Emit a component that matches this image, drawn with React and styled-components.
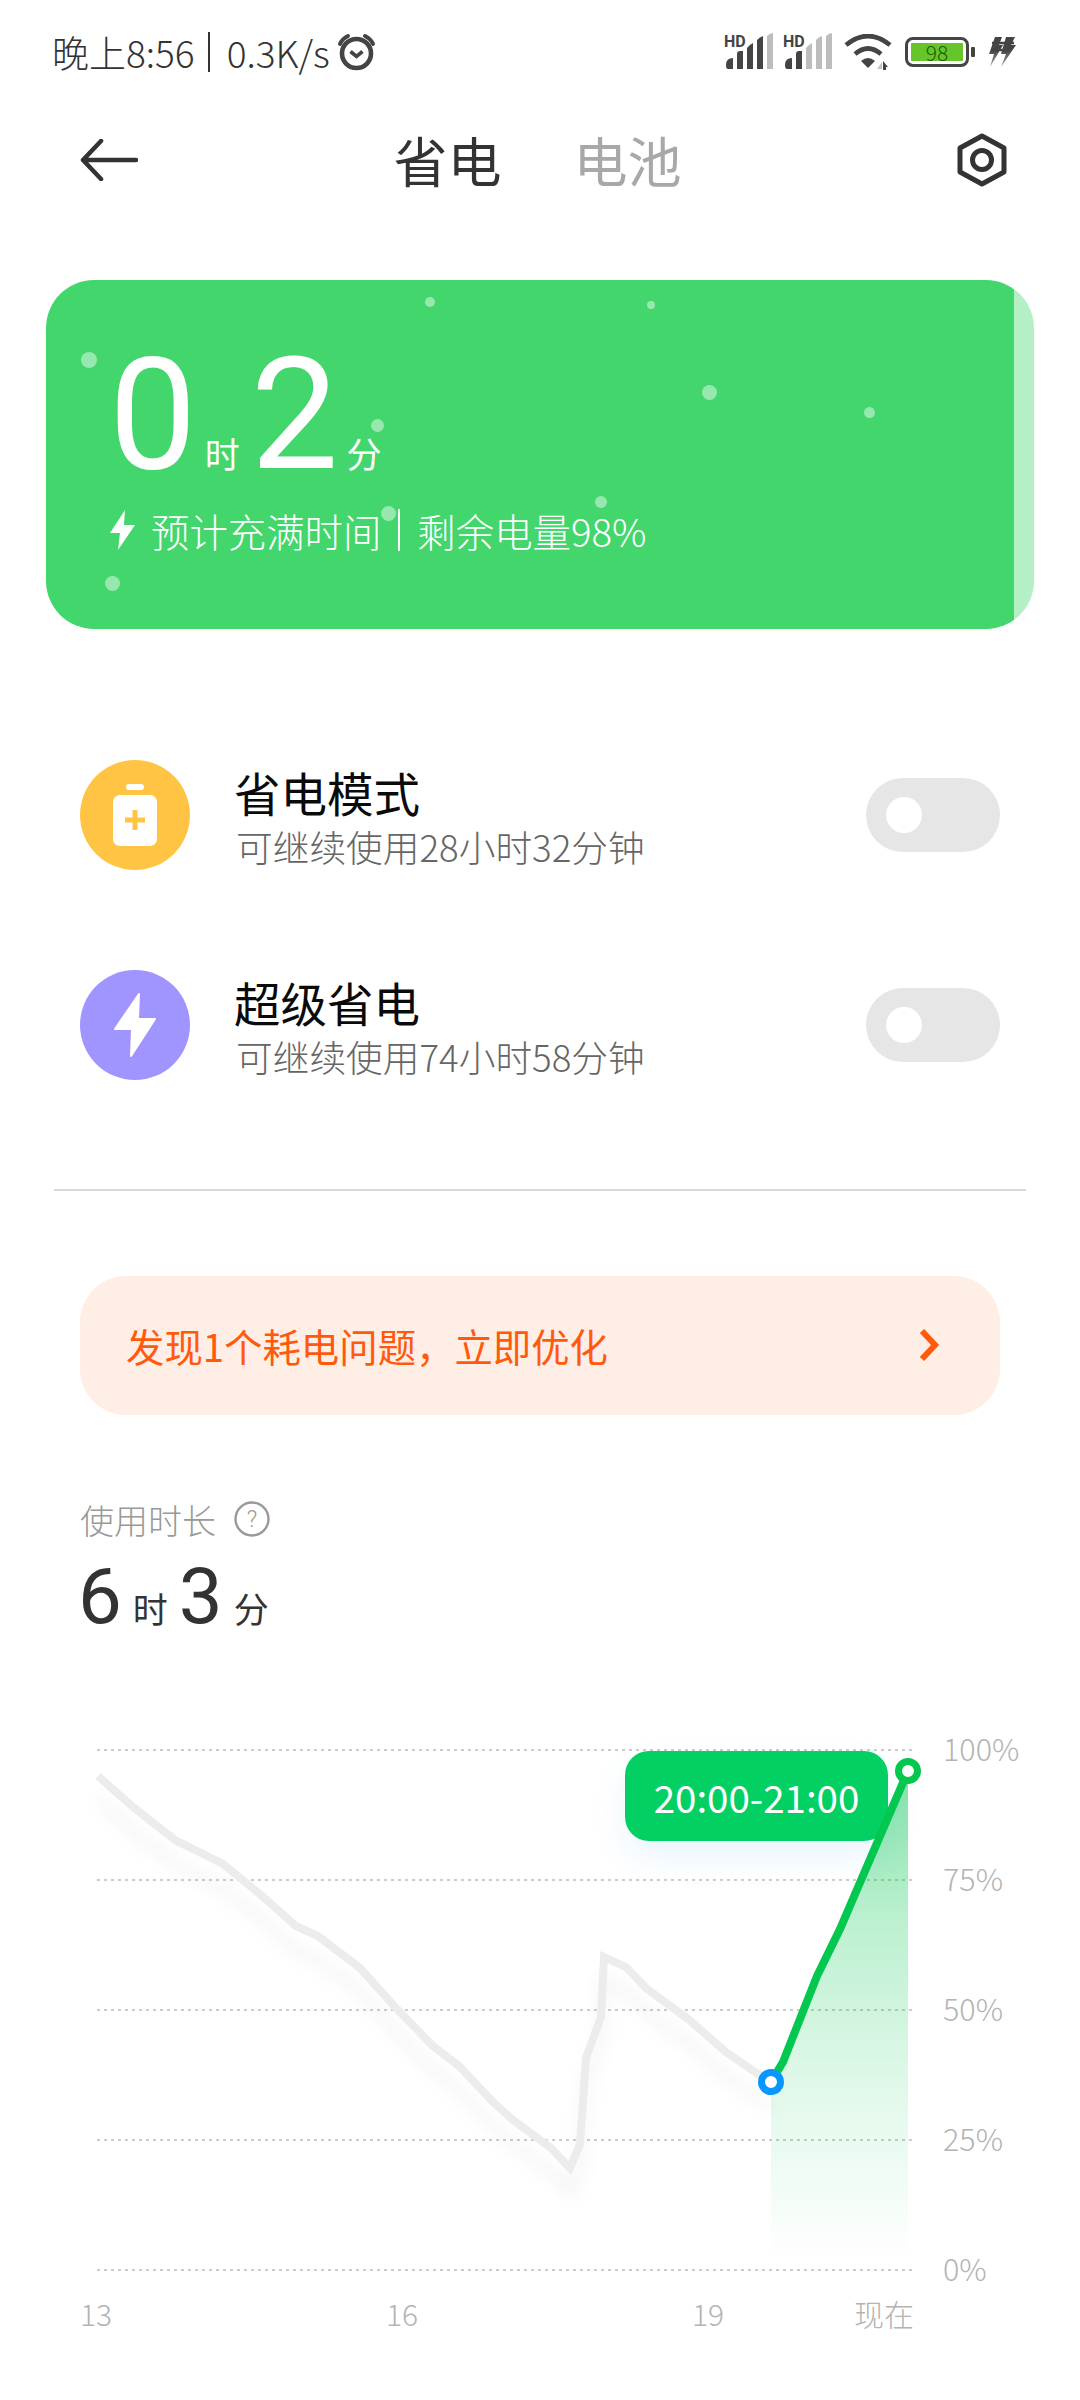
import React from "react";
import styled, { createGlobalStyle } from "styled-components";

const CJK = `"Noto Sans CJK SC", "Noto Sans", sans-serif`;

const GlobalStyle = createGlobalStyle`
  html, body {
    margin: 0;
    padding: 0;
    background: #fff;
  }
  * {
    box-sizing: border-box;
  }
`;

const Page = styled.div`
  width: 1080px;
  height: 2400px;
  overflow: hidden;
  background: #fff;
  font-family: ${CJK};
  display: flex;
  flex-direction: column;
`;

const StatusBar = styled.div`
  height: 104px;
  padding: 30px 64px 0 52px;
  display: flex;
  justify-content: space-between;
  align-items: flex-start;
`;

const StatusLeft = styled.div`
  display: flex;
  align-items: center;
  height: 44px;
  font-size: 37px;
  font-weight: 300;
  color: #333;
  white-space: nowrap;
`;

const StatusSep = styled.span`
  display: inline-block;
  width: 2px;
  height: 40px;
  margin: 0 17px 0 13px;
  background: #333;
`;

const StatusRight = styled.div`
  display: flex;
  align-items: center;
  height: 44px;
`;

const BatteryWrap = styled.div`
  display: flex;
  align-items: center;
  margin: 0 13px 0 13px;
`;

const BatteryBody = styled.div`
  width: 64px;
  height: 30px;
  border: 3px solid #444;
  border-radius: 8px;
  padding: 3px;
`;

const BatteryFill = styled.div`
  height: 100%;
  background: #66c52a;
  border-radius: 1px;
  color: #1d5a08;
  font-size: 21px;
  line-height: 18px;
  text-align: center;
  font-weight: 300;
`;

const BatteryTip = styled.div`
  width: 4px;
  height: 10px;
  margin-left: 2px;
  border-radius: 1px;
  background: #444;
`;

const NavBar = styled.div`
  height: 112px;
  padding: 0 73px 0 80px;
  display: flex;
  align-items: center;
  justify-content: space-between;
`;

const Tabs = styled.div`
  display: flex;
  gap: 72px;
  margin-right: 20px;
`;

const Tab = styled.div`
  font-size: 54px;
  line-height: 58px;
  font-weight: 400;
  color: ${(p) => (p.$active ? "#333" : "#a8a8a8")};
`;

const ChargeCard = styled.div`
  position: relative;
  margin: 64px 46px 0;
  height: 349px;
  border-radius: 48px;
  overflow: hidden;
  background: linear-gradient(90deg, #42d66c 0 968px, #b5efc5 968px);
  color: #fff;
  padding: 57px 0 0 63px;
`;

const Speck = styled.span`
  position: absolute;
  border-radius: 50%;
  background: rgba(255, 255, 255, 0.45);
  left: ${(p) => p.$x}px;
  top: ${(p) => p.$y}px;
  width: ${(p) => p.$size}px;
  height: ${(p) => p.$size}px;
`;

const BigTime = styled.div`
  display: flex;
  align-items: baseline;
  height: 160px;
`;

const BigNum = styled.span`
  font-family: Roboto, sans-serif;
  font-weight: 400;
  font-size: 156px;
  line-height: 156px;
`;

const BigUnit = styled.span`
  font-size: 35px;
  font-weight: 400;
  margin: 0 ${(p) => p.$right}px 0 ${(p) => p.$left}px;
`;

const ChargeInfo = styled.div`
  display: flex;
  align-items: center;
  margin-top: 6px;
  font-size: 38.4px;
  line-height: 54px;
  font-weight: 300;
  white-space: nowrap;
  margin-left: 1px;
`;

const InfoBolt = styled.svg`
  width: 26px;
  height: 40px;
  margin-right: 15px;
`;

const InfoSep = styled.span`
  display: inline-block;
  width: 2px;
  height: 42px;
  margin: 0 17px;
  background: #fff;
`;

const Modes = styled.div`
  margin-top: 131px;
  padding: 0 80px;
  display: flex;
  flex-direction: column;
  gap: 100px;
`;

const ModeRow = styled.div`
  height: 110px;
  display: flex;
  align-items: center;
`;

const ModeIcon = styled.div`
  width: 110px;
  height: 110px;
  border-radius: 50%;
  background: ${(p) => p.$color};
  display: flex;
  align-items: center;
  justify-content: center;
  flex-shrink: 0;
`;

const ModeText = styled.div`
  margin-left: 44px;
  flex: 1;
`;

const ModeTitle = styled.div`
  font-size: 46.5px;
  line-height: 61px;
  color: #0a0a0a;
`;

const ModeSub = styled.div`
  font-size: 36.7px;
  line-height: 48px;
  font-weight: 300;
  color: #666;
  margin-left: 2px;
`;

const Toggle = styled.div`
  width: 134px;
  height: 74px;
  border-radius: 37px;
  background: #e6e6e6;
  padding: 19px 20px;
`;

const Knob = styled.div`
  width: 36px;
  height: 36px;
  border-radius: 50%;
  background: #fff;
`;

const Divider = styled.div`
  height: 2px;
  margin: 109px 54px 0;
  background: #d9d9d9;
`;

const Banner = styled.div`
  margin: 85px 80px 0;
  height: 139px;
  border-radius: 46px;
  background: #ffeee6;
  color: #ff5a0c;
  padding: 0 60px 2px 46px;
  display: flex;
  align-items: center;
  justify-content: space-between;
  font-size: 38.4px;
`;

const Usage = styled.div`
  margin: 77px 80px 0;
`;

const UsageLabel = styled.div`
  display: flex;
  align-items: center;
  gap: 18px;
  height: 54px;
  font-size: 34px;
  font-weight: 300;
  color: #999;
`;

const UsageValue = styled.div`
  display: flex;
  align-items: baseline;
  height: 90px;
  margin-top: 6px;
  color: #333;
`;

const UsageNum = styled.span`
  font-family: Roboto, sans-serif;
  font-size: 78px;
  line-height: 90px;
  margin-left: -2px;
`;

const UsageUnit = styled.span`
  font-size: 35px;
  margin: 0 13px 0 11px;
`;

const Chart = styled.div`
  margin-top: 77px;
  padding-left: 80px;
  display: flex;
`;

const Plot = styled.div`
  position: relative;
  width: 860px;
  height: 560px;
`;

const PlotSvg = styled.svg`
  display: block;
  overflow: visible;
`;

const MarkerSvg = styled(PlotSvg)`
  position: absolute;
  left: 0;
  top: 0;
`;

const Tooltip = styled.div`
  position: absolute;
  left: 545px;
  top: 32px;
  width: 263px;
  height: 90px;
  border-radius: 24px;
  background: #03d063;
  color: #fff;
  font-size: 38.5px;
  font-weight: 400;
  display: flex;
  align-items: center;
  justify-content: center;
  box-shadow: 0 16px 34px rgba(0, 140, 255, 0.09);
`;

const YAxis = styled.div`
  margin: 9px 0 0 3px;
  display: flex;
  flex-direction: column;
  gap: 90px;
`;

const YLabel = styled.div`
  height: 40px;
  line-height: 40px;
  font-size: 30.5px;
  font-weight: 300;
  color: #b3b3b3;
`;

const XAxis = styled.div`
  display: grid;
  grid-template-columns: 306px 306px 1fr auto;
  margin: 3px 166px 0 80px;
  font-size: 30px;
  line-height: 44px;
  font-weight: 300;
  color: #b3b3b3;
`;

const SignalBars = [
  "M0 32 q0-7 7-7 v11 h-5 q-2 0-2-4z",
  "M11 21 q0-3 3-3 q2 0 3 0 v18 h-6z",
  "M21 15 q2-3 6-5 v26 h-6z",
  "M31 7 q3-3 6-4 v33 h-6z",
  "M41 3 q3-3 6-3 v36 h-6z",
];

function Signal({ active }) {
  return (
    <svg width="50" height="38" viewBox="0 0 50 38" style={{ marginRight: 9 }}>
      <text x="0" y="14" fontSize="16" fontWeight="700" fill="#444" fontFamily="Roboto, sans-serif">
        HD
      </text>
      {SignalBars.map((d, i) => (
        <path key={d} d={d} transform="translate(2,0)" fill={i < active ? "#444" : "#bdbdbd"} />
      ))}
    </svg>
  );
}

function AlarmIcon() {
  return (
    <svg width="40" height="38" viewBox="0 0 40 38" style={{ marginLeft: 7 }}>
      <circle cx="19.5" cy="20.5" r="14.5" fill="none" stroke="#444" strokeWidth="4.6" />
      <path d="M13.5 18.5 l6 5 l6-5" fill="none" stroke="#444" strokeWidth="3.6" />
      <path d="M3 11 Q5 6 11 3" fill="none" stroke="#444" strokeWidth="4" strokeLinecap="round" />
      <path d="M36 11 Q34 6 28 3" fill="none" stroke="#444" strokeWidth="4" strokeLinecap="round" />
    </svg>
  );
}

function WifiIcon() {
  return (
    <svg width="50" height="36" viewBox="0 0 50 36">
      <path d="M4 11 Q26 -7 48 11" fill="none" stroke="#444" strokeWidth="4.6" />
      <path d="M13 20 Q26 9 39 20" fill="none" stroke="#444" strokeWidth="4.6" />
      <path d="M19 27 Q26 21 33 27 L26 34z" fill="#444" />
      <path d="M35 35 l5-7 v7z" fill="#c4c4c4" />
      <path d="M41 27 l5 6 h-2 v3 h-3z" fill="#444" />
    </svg>
  );
}

function ChargeBolts() {
  return (
    <svg width="28" height="30" viewBox="0 0 28 30">
      <defs>
        <linearGradient id="boltTail" x1="0" y1="0" x2="0" y2="1">
          <stop offset="0.45" stopColor="#444" />
          <stop offset="1" stopColor="#aaa" />
        </linearGradient>
      </defs>
      <path d="M7 0 h7 l-3 8 h4 L2 30 l4-13 H1z" fill="url(#boltTail)" />
      <path d="M18 0 h9 l-4 8 h5 L13 30 l5-13 h-5z" fill="url(#boltTail)" />
      <path d="M4 6 H26 M3 13 H23" stroke="#444" strokeWidth="2.4" />
    </svg>
  );
}

function BackArrow() {
  return (
    <svg width="58" height="42" viewBox="0 0 58 42">
      <path d="M21 2 L3 21 L21 40 M3 21 H56" fill="none" stroke="#333" strokeWidth="4.5" strokeLinecap="round" strokeLinejoin="round" />
    </svg>
  );
}

function SettingsHex() {
  return (
    <svg width="50" height="54" viewBox="0 0 50 54">
      <path d="M25 3 L47 15 V39 L25 51 L3 39 V15z" fill="none" stroke="#333" strokeWidth="5" strokeLinejoin="round" />
      <circle cx="25" cy="27" r="9.5" fill="none" stroke="#333" strokeWidth="5" />
    </svg>
  );
}

function SaverIcon() {
  return (
    <svg width="44" height="62" viewBox="0 0 44 62">
      <rect x="13" y="0" width="18" height="6" rx="3" fill="#fff" />
      <rect x="0" y="11" width="44" height="51" rx="7" fill="#fff" />
      <path d="M22 26 V46 M12 36 H32" stroke="#ffc444" strokeWidth="5" />
    </svg>
  );
}

function SuperIcon() {
  return (
    <svg width="44" height="66" viewBox="0 0 44 66">
      <path d="M26 2 L2 37 H19 L18 64 L42 27 H25z" fill="#fff" stroke="#fff" strokeWidth="2" strokeLinejoin="round" />
    </svg>
  );
}

function Chevron() {
  return (
    <svg width="22" height="36" viewBox="0 0 22 36">
      <path d="M4 4 L17 18 L4 32" fill="none" stroke="#ff5a0c" strokeWidth="6" />
    </svg>
  );
}

function HelpIcon() {
  return (
    <svg width="36" height="36" viewBox="0 0 36 36">
      <circle cx="18" cy="18" r="16.5" fill="none" stroke="#999" strokeWidth="2.4" />
      <text x="18" y="26" textAnchor="middle" fontSize="23" fill="#999" fontFamily="Roboto, sans-serif">
        ?
      </text>
    </svg>
  );
}

const specks = [
  { x: 35, y: 72, size: 16 },
  { x: 379, y: 17, size: 10 },
  { x: 601, y: 21, size: 8 },
  { x: 656, y: 105, size: 15 },
  { x: 818, y: 127, size: 11 },
  { x: 325, y: 139, size: 13 },
  { x: 549, y: 216, size: 12 },
  { x: 335, y: 226, size: 15 },
  { x: 59, y: 296, size: 15 },
];

const usedLine =
  "98,1777 133,1808 175,1841 223,1865 261,1896 296,1927 318,1937 360,1969 395,2008 433,2047 459,2067 494,2104 513,2121 551,2149 570,2169 580,2145 586,2059 601,2018 604,1958 626,1968 647,1990 688,2020 726,2053 771,2084";
const chargeLine = "771,2083 783,2063 817,1977 840,1930 908,1772";
const gridYs = [1751, 1881, 2011, 2141, 2271];
const yLabels = ["100%", "75%", "50%", "25%", "0%"];

function BatteryChart() {
  return (
    <PlotSvg width="860" height="560" viewBox="80 1720 860 560">
      <defs>
        <linearGradient id="chargeFill" x1="0" y1="0" x2="0" y2="1">
          <stop offset="0" stopColor="#04c74f" stopOpacity="0.5" />
          <stop offset="0.3" stopColor="#04c74f" stopOpacity="0.27" />
          <stop offset="0.65" stopColor="#04c74f" stopOpacity="0.12" />
          <stop offset="1" stopColor="#04c74f" stopOpacity="0" />
        </linearGradient>
        <filter id="soft" x="-10%" y="-10%" width="120%" height="130%">
          <feGaussianBlur stdDeviation="8" />
        </filter>
      </defs>
      {gridYs.map((y) => (
        <line key={y} x1="97" x2="914" y1={y} y2={y} stroke="#ccc" strokeWidth="2" strokeDasharray="3 4" />
      ))}
      <polyline points={usedLine} fill="none" stroke="#000" strokeOpacity="0.04" strokeWidth="10" filter="url(#soft)" transform="translate(0,24)" />
      <polyline points={usedLine} fill="none" stroke="#ececec" strokeWidth="8" />
      <polygon points={`${chargeLine} 908,2262 771,2262`} fill="url(#chargeFill)" />
    </PlotSvg>
  );
}

function ChartMarkers() {
  return (
    <MarkerSvg width="860" height="560" viewBox="80 1720 860 560">
      <polyline points={chargeLine} fill="none" stroke="#04c74f" strokeWidth="8" />
      <circle cx="771" cy="2083" r="9.5" fill="#fff" stroke="#0a96ff" strokeWidth="7" />
      <circle cx="908" cy="1772" r="9.5" fill="#fff" stroke="#04c74f" strokeWidth="7" />
    </MarkerSvg>
  );
}

export default function App() {
  return (
    <Page>
      <GlobalStyle />
      <StatusBar>
        <StatusLeft>
          晚上8:56
          <StatusSep />
          0.3K/s
          <AlarmIcon />
        </StatusLeft>
        <StatusRight>
          <Signal active={4} />
          <Signal active={2} />
          <WifiIcon />
          <BatteryWrap>
            <BatteryBody>
              <BatteryFill>98</BatteryFill>
            </BatteryBody>
            <BatteryTip />
          </BatteryWrap>
          <ChargeBolts />
        </StatusRight>
      </StatusBar>

      <NavBar>
        <BackArrow />
        <Tabs>
          <Tab $active>省电</Tab>
          <Tab>电池</Tab>
        </Tabs>
        <SettingsHex />
      </NavBar>

      <ChargeCard>
        {specks.map((s) => (
          <Speck key={s.x} $x={s.x} $y={s.y} $size={s.size} />
        ))}
        <BigTime>
          <BigNum>0</BigNum>
          <BigUnit $left={8} $right={11}>时</BigUnit>
          <BigNum>2</BigNum>
          <BigUnit $left={8} $right={0}>分</BigUnit>
        </BigTime>
        <ChargeInfo>
          <InfoBolt viewBox="0 0 26 40">
            <path d="M15 0 L0 23 H10 L8 40 L25 15 H14z" fill="#fff" />
          </InfoBolt>
          预计充满时间
          <InfoSep />
          剩余电量98%
        </ChargeInfo>
      </ChargeCard>

      <Modes>
        <ModeRow>
          <ModeIcon $color="#ffc444">
            <SaverIcon />
          </ModeIcon>
          <ModeText>
            <ModeTitle>省电模式</ModeTitle>
            <ModeSub>可继续使用28小时32分钟</ModeSub>
          </ModeText>
          <Toggle>
            <Knob />
          </Toggle>
        </ModeRow>
        <ModeRow>
          <ModeIcon $color="#a094ff">
            <SuperIcon />
          </ModeIcon>
          <ModeText>
            <ModeTitle>超级省电</ModeTitle>
            <ModeSub>可继续使用74小时58分钟</ModeSub>
          </ModeText>
          <Toggle>
            <Knob />
          </Toggle>
        </ModeRow>
      </Modes>

      <Divider />

      <Banner>
        <span>发现1个耗电问题，立即优化</span>
        <Chevron />
      </Banner>

      <Usage>
        <UsageLabel>
          使用时长
          <HelpIcon />
        </UsageLabel>
        <UsageValue>
          <UsageNum>6</UsageNum>
          <UsageUnit>时</UsageUnit>
          <UsageNum>3</UsageNum>
          <UsageUnit>分</UsageUnit>
        </UsageValue>
      </Usage>

      <Chart>
        <Plot>
          <BatteryChart />
          <Tooltip>20:00-21:00</Tooltip>
          <ChartMarkers />
        </Plot>
        <YAxis>
          {yLabels.map((l) => (
            <YLabel key={l}>{l}</YLabel>
          ))}
        </YAxis>
      </Chart>
      <XAxis>
        <span>13</span>
        <span>16</span>
        <span>19</span>
        <span>现在</span>
      </XAxis>
    </Page>
  );
}
